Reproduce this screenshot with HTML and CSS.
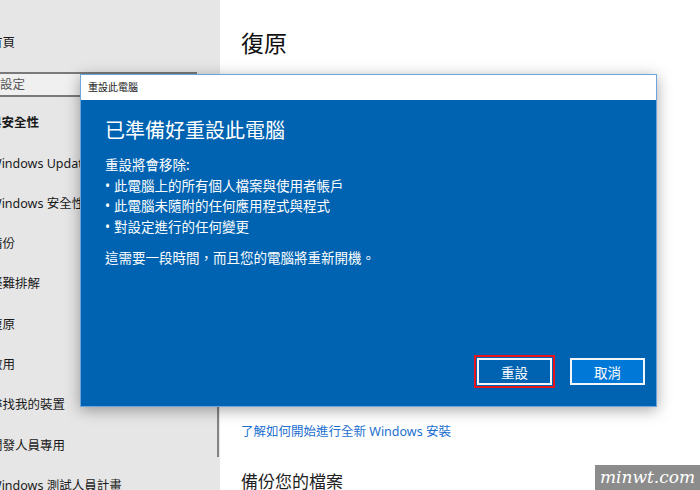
FILE: index.html
```html
<!DOCTYPE html>
<html lang="zh-TW">
<head>
    <meta charset="UTF-8">
    <title>設定 - 復原</title>
    <link rel="stylesheet" href="styles.css">
</head>
<body>

<div class="window">
    <!-- 左側選單 -->
    <div class="sidebar">
        <div class="sidebar-inner">
            <div class="app-title">設定</div>
            <div class="nav-item">首頁</div>
            <div class="search-box">尋找設定</div>
            <div class="nav-header">更新與安全性</div>
            <div class="nav-item">Windows Update</div>
            <div class="nav-item">Windows 安全性</div>
            <div class="nav-item">備份</div>
            <div class="nav-item">疑難排解</div>
            <div class="nav-item">復原</div>
            <div class="nav-item">啟用</div>
            <div class="nav-item">尋找我的裝置</div>
            <div class="nav-item">開發人員專用</div>
            <div class="nav-item">Windows 測試人員計畫</div>
        </div>
        <div class="scrollbar"></div>
    </div>

    <!-- 右側內容 -->
    <div class="content">
        <h1 class="page-title">復原</h1>
        <div class="hidden-section"></div>
        <a class="link" href="#">了解如何開始進行全新 Windows 安裝</a>
        <h2 class="sub-title">備份您的檔案</h2>
    </div>

    <!-- 重設對話框 -->
    <div class="dialog">
        <div class="dialog-titlebar">重設此電腦</div>
        <div class="dialog-body">
            <div class="dialog-heading">已準備好重設此電腦</div>
            <div class="dialog-text">重設將會移除:</div>
            <ul class="dialog-list">
                <li>此電腦上的所有個人檔案與使用者帳戶</li>
                <li>此電腦未隨附的任何應用程式與程式</li>
                <li>對設定進行的任何變更</li>
            </ul>
            <div class="dialog-text dialog-note">這需要一段時間，而且您的電腦將重新開機。</div>
            <div class="dialog-buttons">
                <button class="btn btn-primary">重設</button>
                <button class="btn">取消</button>
            </div>
        </div>
    </div>

    <div class="watermark">minwt.com</div>
</div>

</body>
</html>
```

FILE: styles.css
```css
body {
    margin: 0;
    font-family: 'Noto Sans', 'Noto Sans CJK TC', sans-serif;
    color: #1a1a1a;
    background: #fff;
}

.window {
    position: relative;
    display: flex;
    width: 700px;
    height: 490px;
    overflow: hidden;
}

/* 左側選單 */
.sidebar {
    position: relative;
    width: 220px;
    flex-shrink: 0;
    background: #e6e6e6;
    overflow: hidden;
}

.sidebar-inner {
    margin-left: -36px;
    font-size: 12.5px;
}

.app-title {
    margin-top: -17px;
    margin-bottom: 20px;
    padding-left: 36px;
    font-size: 14px;
    line-height: 20px;
}

.nav-item {
    height: 40.3px;
    line-height: 40.3px;
    padding-left: 26px;
    white-space: nowrap;
}

.search-box {
    margin: 9px 0 6px 0;
    height: 21px;
    line-height: 21px;
    width: 220px;
    padding-left: 9px;
    box-sizing: content-box;
    border: 2px solid #7a7a7a;
    background: #f0f0f0;
    color: #555;
}

.nav-header {
    height: 40.3px;
    line-height: 40.3px;
    font-weight: bold;
    white-space: nowrap;
}

.scrollbar {
    position: absolute;
    right: 1px;
    top: 300px;
    width: 2px;
    height: 157px;
    background: #858585;
}

/* 右側內容 */
.content {
    flex: 1;
    padding-left: 21px;
}

.page-title {
    margin: 28px 0 0 0;
    font-size: 23px;
    line-height: 30px;
    font-weight: normal;
    color: #111;
}

.hidden-section {
    height: 364px;
}

.link {
    display: block;
    font-size: 12.5px;
    line-height: 20px;
    color: #1c6fcf;
    text-decoration: none;
}

.sub-title {
    margin: 28px 0 0 0;
    font-size: 17px;
    line-height: 24px;
    font-weight: normal;
    color: #222;
}

/* 對話框 */
.dialog {
    position: absolute;
    left: 80px;
    top: 74px;
    width: 575px;
    height: 331px;
    display: flex;
    flex-direction: column;
    border: 1px solid #6ea6dc;
    background: #0063b1;
    box-shadow: 0 3px 14px rgba(0, 0, 0, 0.35);
}

.dialog-titlebar {
    height: 25px;
    line-height: 25px;
    padding-left: 7px;
    background: #fff;
    font-size: 10px;
    color: #222;
}

.dialog-body {
    flex: 1;
    display: flex;
    flex-direction: column;
    padding: 17px 11px 21px 24px;
    color: #fff;
}

.dialog-heading {
    font-size: 20px;
    line-height: 28px;
    margin-bottom: 10px;
}

.dialog-text {
    font-size: 13.5px;
    line-height: 20.7px;
}

.dialog-list {
    list-style: none;
    margin: 0;
    padding: 0;
    font-size: 13.5px;
    line-height: 20.7px;
}

.dialog-list li::before {
    content: "•";
    display: inline-block;
    width: 9px;
    font-family: 'Noto Sans', sans-serif;
}

.dialog-note {
    margin-top: 10px;
}

.dialog-buttons {
    margin-top: auto;
    display: flex;
    justify-content: flex-end;
    gap: 18px;
}

.btn {
    width: 75px;
    height: 27px;
    border: 2px solid #f2f6fb;
    background: #0078d7;
    color: #fff;
    font-family: 'Noto Sans CJK TC', sans-serif;
    font-size: 13.5px;
    padding: 0;
}

.btn-primary {
    background: #0063b1;
    outline: 2px solid #e8141c;
    outline-offset: 1px;
}

.watermark {
    position: absolute;
    right: 0;
    bottom: 0;
    width: 105px;
    height: 25px;
    line-height: 25px;
    background: #8c8c8c;
    color: #fff;
    font-family: 'DejaVu Serif', serif;
    font-style: italic;
    font-size: 17px;
    text-align: center;
}
```
